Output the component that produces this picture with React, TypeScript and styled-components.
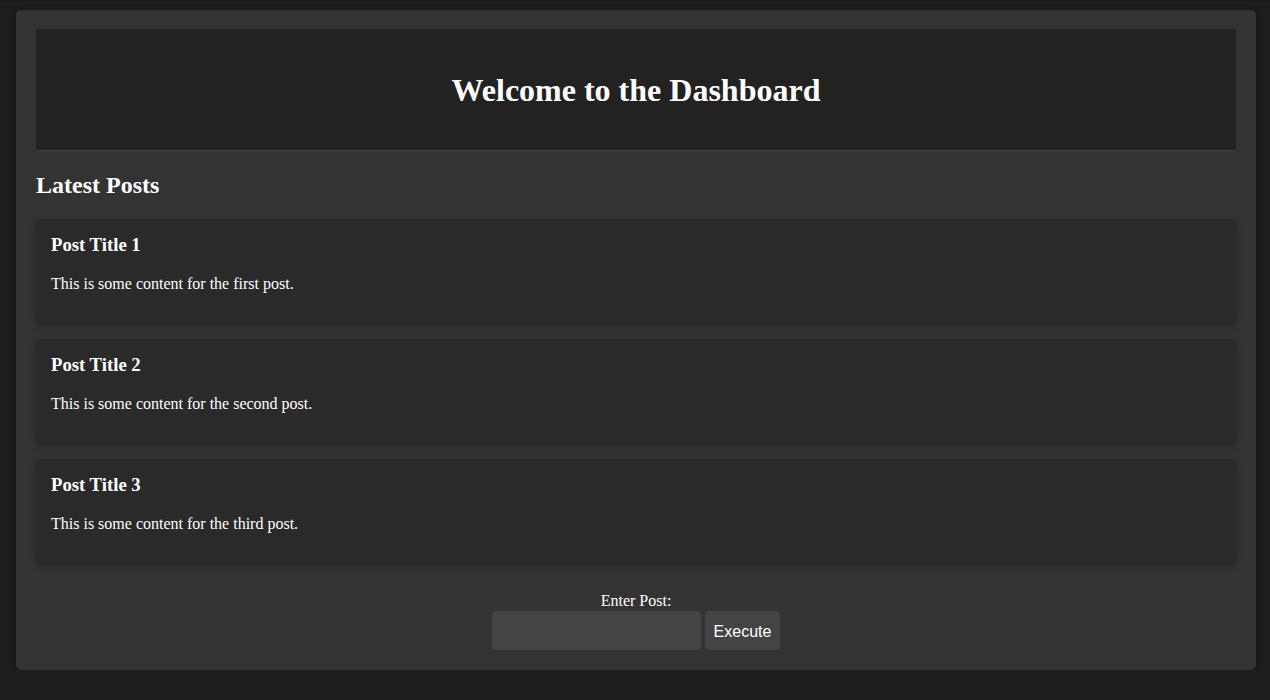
import React from "react";
import styled, { createGlobalStyle } from "styled-components";

const Global = createGlobalStyle`
  html, body { margin: 0; padding: 0; background: #1e1e1e; }
  body {
    font-family: "Liberation Serif", "Times New Roman", serif;
    color: #fff;
    border-top: 1px solid #181818;
  }
`;

const Container = styled.div`
  margin: 9px 14px 0 16px;
  background: #333;
  border-radius: 5px;
  padding: 19px 20px 20px 20px;
  box-shadow: 0 0 8px rgba(0,0,0,0.35);
`;

const Header = styled.header`
  background: #222;
  padding: 20px 20px 19px;
  text-align: center;
  border-bottom: 1px solid #444;
`;

const Title = styled.h1`
  margin: 22px 0;
  font-size: 32px;
  line-height: 38px;
  font-weight: bold;
`;

const SectionTitle = styled.h2`
  font-size: 24px;
  line-height: 28px;
  margin: 20px 0 20px;
`;

const Card = styled.div`
  background: #2a2a2a;
  border-radius: 5px;
  padding: 15px;
  margin-bottom: 15px;
  box-shadow: 0 2px 6px rgba(0,0,0,0.25);
`;

const CardTitle = styled.h3`
  margin: 0 0 19px;
  font-size: 18.72px;
  line-height: 22px;
`;

const CardText = styled.p`
  margin: 0 0 16px;
  font-size: 16px;
  line-height: 18px;
`;

const Form = styled.form`
  text-align: center;
  margin-top: 28px;
`;

const Label = styled.label`
  display: block;
  font-size: 16px;
  line-height: 18px;
  margin-bottom: 1px;
`;

const Row = styled.div`
  display: flex;
  justify-content: center;
  gap: 4px;
`;

const Input = styled.input`
  width: 209px;
  height: 39px;
  box-sizing: border-box;
  background: #444;
  border: none;
  border-radius: 4px;
  color: #fff;
  outline: none;
`;

const Button = styled.button`
  width: 75px;
  height: 39px;
  background: #444;
  border: none;
  border-radius: 4px;
  color: #fff;
  font-family: "Liberation Sans", Arial, sans-serif;
  font-size: 16px;
  padding: 2px 0 0;
`;

const posts = [
  { title: "Post Title 1", text: "This is some content for the first post." },
  { title: "Post Title 2", text: "This is some content for the second post." },
  { title: "Post Title 3", text: "This is some content for the third post." },
];

export default function App() {
  return (
    <>
      <Global />
      <Container>
        <Header>
          <Title>Welcome to the Dashboard</Title>
        </Header>
        <SectionTitle>Latest Posts</SectionTitle>
        {posts.map((p) => (
          <Card key={p.title}>
            <CardTitle>{p.title}</CardTitle>
            <CardText>{p.text}</CardText>
          </Card>
        ))}
        <Form onSubmit={(e) => e.preventDefault()}>
          <Label htmlFor="post">Enter Post:</Label>
          <Row>
            <Input id="post" type="text" />
            <Button type="submit">Execute</Button>
          </Row>
        </Form>
      </Container>
    </>
  );
}
